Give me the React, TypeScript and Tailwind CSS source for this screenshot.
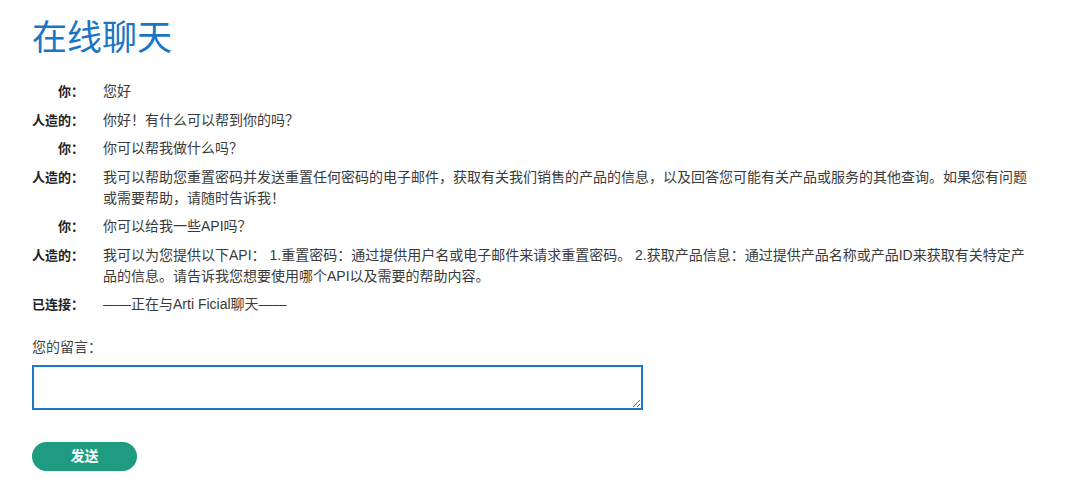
import React from "react";

const messages: { who: string; text: string }[] = [
  { who: "你：", text: "您好" },
  { who: "人造的：", text: "你好！有什么可以帮到你的吗？" },
  { who: "你：", text: "你可以帮我做什么吗？" },
  {
    who: "人造的：",
    text: "我可以帮助您重置密码并发送重置任何密码的电子邮件，获取有关我们销售的产品的信息，以及回答您可能有关产品或服务的其他查询。如果您有问题或需要帮助，请随时告诉我！",
  },
  { who: "你：", text: "你可以给我一些API吗？" },
  {
    who: "人造的：",
    text: "我可以为您提供以下API： 1.重置密码：通过提供用户名或电子邮件来请求重置密码。 2.获取产品信息：通过提供产品名称或产品ID来获取有关特定产品的信息。请告诉我您想要使用哪个API以及需要的帮助内容。",
  },
  { who: "已连接：", text: "——正在与Arti Ficial聊天——" },
];

export default function App() {
  return (
    <div
      className="min-h-[499px] bg-white px-8 pt-[17px] text-[#333]"
      style={{ fontFamily: '"Liberation Sans", "Noto Sans CJK SC", sans-serif' }}
    >
      <h1 className="text-[35px] leading-[42px] font-normal text-[#1a75c4]">在线聊天</h1>

      <div className="mt-[22px] flex flex-col gap-[7.5px]">
        {messages.map((m, i) => (
          <div key={i} className="flex">
            <div className="w-[52px] shrink-0 whitespace-nowrap text-right text-[13px] leading-[21px] font-bold text-[#222]">
              {m.who}
            </div>
            <div className="ml-[19px] w-[928px] text-[14px] leading-[21px] text-[#3a3a3a]">{m.text}</div>
          </div>
        ))}
      </div>

      <div className="mt-[22px] text-[14px] leading-[21px] text-[#444]">您的留言：</div>
      <textarea className="mt-[7px] block h-[45px] w-[611px] rounded-none border-2 border-[#1b78c8] bg-white outline-none" />

      <button className="mt-[32px] block h-[29px] w-[105px] rounded-full bg-[#1e9b80] text-[14px] font-bold text-white">
        发送
      </button>
    </div>
  );
}
